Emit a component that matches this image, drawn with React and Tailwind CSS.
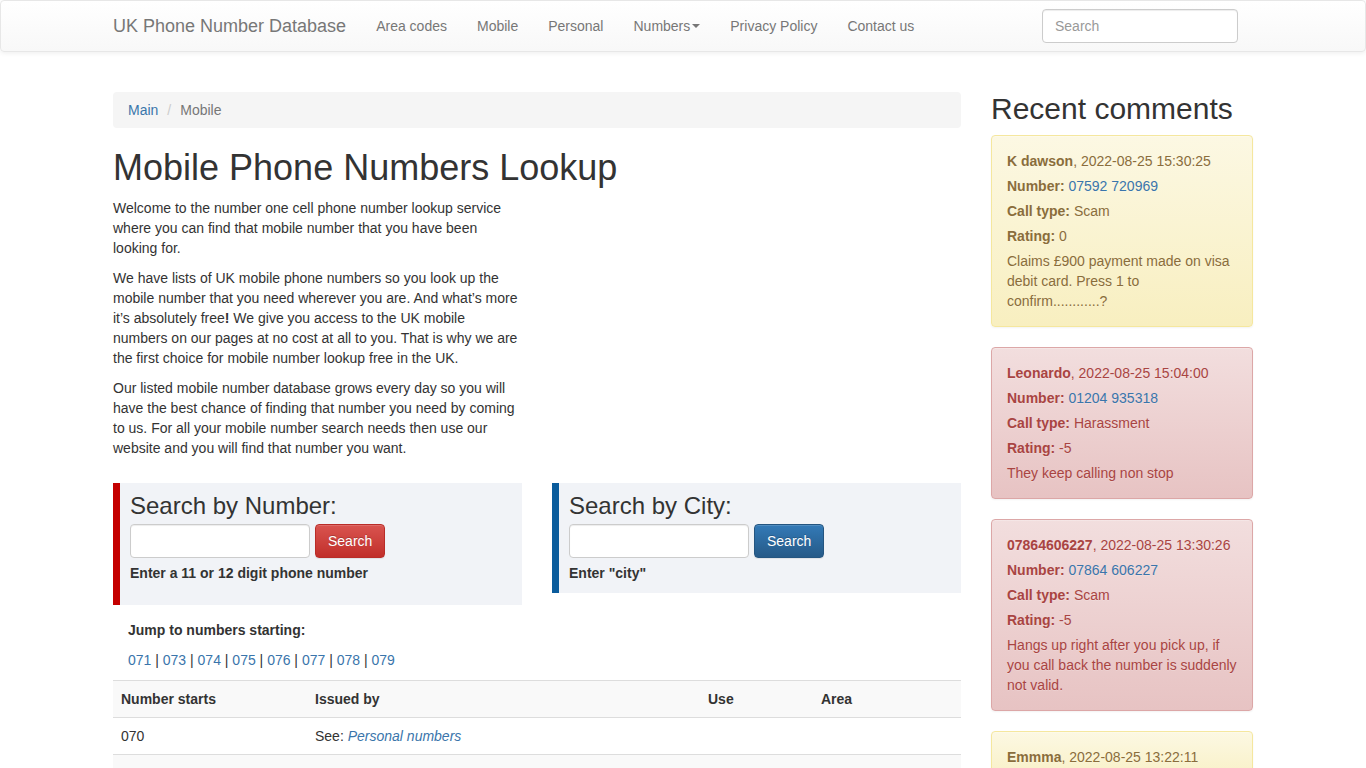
import React from 'react';

const navLinks = ['Area codes', 'Mobile', 'Personal'];
const jumpLinks = ['071', '073', '074', '075', '076', '077', '078', '079'];

const comments = [
  {
    kind: 'warning',
    name: 'K dawson',
    date: '2022-08-25 15:30:25',
    number: '07592 720969',
    type: 'Scam',
    rating: '0',
    text: 'Claims £900 payment made on visa debit card. Press 1 to confirm............?',
  },
  {
    kind: 'danger',
    name: 'Leonardo',
    date: '2022-08-25 15:04:00',
    number: '01204 935318',
    type: 'Harassment',
    rating: '-5',
    text: 'They keep calling non stop',
  },
  {
    kind: 'danger',
    name: '07864606227',
    date: '2022-08-25 13:30:26',
    number: '07864 606227',
    type: 'Scam',
    rating: '-5',
    text: 'Hangs up right after you pick up, if you call back the number is suddenly not valid.',
  },
  {
    kind: 'warning',
    name: 'Emmma',
    date: '2022-08-25 13:22:11',
  },
];

function Navbar() {
  return (
    <nav className="h-[52px] mb-10 bg-linear-to-b from-white to-[#f8f8f8] border border-[#e7e7e7] rounded shadow-[inset_0_1px_0_rgba(255,255,255,0.15),0_1px_5px_rgba(0,0,0,0.075)]">
      <div className="w-[1170px] mx-auto flex px-[15px] text-[#777]">
        <a href="#" className="text-lg leading-5 py-[15px] mr-[15px] text-[#777]">UK Phone Number Database</a>
        {navLinks.map((item) => (
          <a key={item} href="#" className="px-[15px] py-[15px] leading-5">{item}</a>
        ))}
        <a href="#" className="px-[15px] py-[15px] leading-5 flex items-center">
          Numbers
          <span className="ml-[2px] w-0 h-0 border-x-4 border-x-transparent border-t-4 border-t-[#777]"></span>
        </a>
        <a href="#" className="px-[15px] py-[15px] leading-5">Privacy Policy</a>
        <a href="#" className="px-[15px] py-[15px] leading-5">Contact us</a>
        <input
          placeholder="Search"
          className="ml-auto mr-[15px] mt-2 w-[196px] h-[34px] px-3 bg-white border border-[#ccc] rounded text-sm text-[#555] placeholder:text-[#999] shadow-[inset_0_1px_1px_rgba(0,0,0,0.075)]"
        />
      </div>
    </nav>
  );
}

function SearchBox({ title, hint, accent, button, extra }) {
  return (
    <div className={`bg-[#f1f3f7] border-l-[7px] pl-[10px] pt-[10px] ${accent} ${extra}`}>
      <h3 className="text-2xl leading-[26.4px] mb-[5px] text-[#333]">{title}</h3>
      <form className="flex gap-[5px]">
        <input className="w-[180px] h-[34px] bg-white border border-[#ccc] rounded px-3 shadow-[inset_0_1px_1px_rgba(0,0,0,0.075)]" />
        <button
          type="button"
          className={`h-[34px] px-3 rounded border text-sm text-white [text-shadow:0_-1px_0_rgba(0,0,0,0.2)] shadow-[inset_0_1px_0_rgba(255,255,255,0.15),0_1px_1px_rgba(0,0,0,0.075)] bg-linear-to-b ${button}`}
        >
          Search
        </button>
      </form>
      <p className="mt-[5px] leading-5 font-bold">{hint}</p>
    </div>
  );
}

function NumbersTable() {
  return (
    <table className="w-full table-fixed border-collapse text-sm">
      <thead>
        <tr className="bg-[#f9f9f9]">
          <th className="w-[194px] text-left font-bold p-2 leading-5 border-t border-[#ddd]">Number starts</th>
          <th className="w-[393px] text-left font-bold p-2 leading-5 border-t border-[#ddd]">Issued by</th>
          <th className="w-[113px] text-left font-bold p-2 leading-5 border-t border-[#ddd]">Use</th>
          <th className="text-left font-bold p-2 leading-5 border-t border-[#ddd]">Area</th>
        </tr>
      </thead>
      <tbody>
        <tr>
          <td className="p-2 leading-5 border-t border-[#ddd]">070</td>
          <td className="p-2 leading-5 border-t border-[#ddd]">
            See: <a href="#" className="italic text-[#3a75ab]">Personal numbers</a>
          </td>
          <td className="p-2 leading-5 border-t border-[#ddd]"></td>
          <td className="p-2 leading-5 border-t border-[#ddd]"></td>
        </tr>
        <tr className="bg-[#f9f9f9]">
          <td className="h-[37px] border-t border-[#ddd]" colSpan={4}></td>
        </tr>
      </tbody>
    </table>
  );
}

function Comment({ item }) {
  const tone =
    item.kind === 'warning'
      ? 'from-[#fcf8e3] to-[#f8efc0] border-[#f5e79e] text-[#8a6d3b]'
      : 'from-[#f2dede] to-[#e7c3c3] border-[#dca7a7] text-[#a94442]';
  return (
    <div className={`mb-5 p-[15px] border rounded bg-linear-to-b leading-5 [text-shadow:0_1px_0_rgba(255,255,255,0.2)] shadow-[inset_0_1px_0_rgba(255,255,255,0.25),0_1px_2px_rgba(0,0,0,0.05)] ${tone}`}>
      <p className="mb-[5px]"><b>{item.name}</b>, {item.date}</p>
      {item.number && (
        <>
          <p className="mb-[5px]"><b>Number:</b> <a href="#" className="text-[#3a75ab]">{item.number}</a></p>
          <p className="mb-[5px]"><b>Call type:</b> {item.type}</p>
          <p className="mb-[5px]"><b>Rating:</b> {item.rating}</p>
          <p>{item.text}</p>
        </>
      )}
    </div>
  );
}

export default function App() {
  return (
    <div className="h-[768px] overflow-hidden bg-white text-sm leading-5 text-[#333] font-['Liberation_Sans',Arial,sans-serif]">
      <Navbar />
      <div className="w-[1170px] mx-auto px-[15px] flex gap-[30px]">
        <main className="w-[848px] shrink-0">
          <div className="h-9 px-[15px] py-2 bg-[#f5f5f5] rounded leading-5">
            <a href="#" className="text-[#3a75ab]">Main</a>
            <span className="text-[#ccc] px-[9px]">/</span>
            <span className="text-[#777]">Mobile</span>
          </div>
          <h1 className="mt-5 mb-[10px] text-4xl leading-[39.6px] font-normal">Mobile Phone Numbers Lookup</h1>
          <div className="w-[409px]">
            <p className="mb-[10px]">Welcome to the number one cell phone number lookup service where you can find that mobile number that you have been looking for.</p>
            <p className="mb-[10px]">We have lists of UK mobile phone numbers so you look up the mobile number that you need wherever you are. And what’s more it’s absolutely free<b>!</b> We give you access to the UK mobile numbers on our pages at no cost at all to you. That is why we are the first choice for mobile number lookup free in the UK.</p>
            <p>Our listed mobile number database grows every day so you will have the best chance of finding that number you need by coming to us. For all your mobile number search needs then use our website and you will find that number you want.</p>
          </div>
          <div className="mt-[25px] grid grid-cols-2 gap-[30px] items-start">
            <SearchBox
              title="Search by Number:"
              hint="Enter a 11 or 12 digit phone number"
              accent="border-[#c40000]"
              extra="pb-[22px]"
              button="from-[#d9534f] to-[#c12e2a] border-[#b92c28]"
            />
            <SearchBox
              title="Search by City:"
              hint={'Enter "city"'}
              accent="border-[#0a5c9c]"
              extra="pb-[10px]"
              button="from-[#337ab7] to-[#265a88] border-[#245580]"
            />
          </div>
          <div className="px-[15px] mt-[15px]">
            <p className="mb-[10px] font-bold">Jump to numbers starting:</p>
            <p className="mb-[10px]">
              {jumpLinks.map((code, i) => (
                <span key={code}>
                  {i > 0 && ' | '}
                  <a href="#" className="text-[#3a75ab]">{code}</a>
                </span>
              ))}
            </p>
          </div>
          <NumbersTable />
        </main>
        <aside className="w-[262px] shrink-0">
          <h2 className="text-[30px] leading-[33px] mb-[10px]">Recent comments</h2>
          {comments.map((item) => (
            <Comment key={item.name} item={item} />
          ))}
        </aside>
      </div>
    </div>
  );
}
